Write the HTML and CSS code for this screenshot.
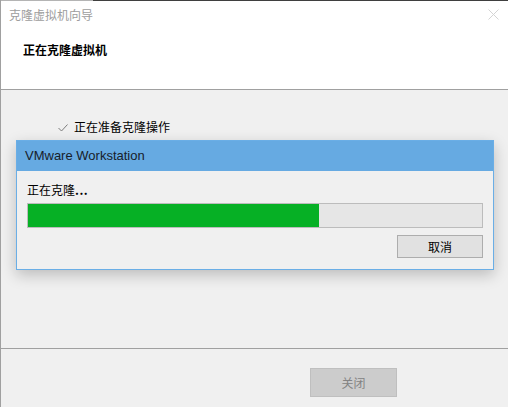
FILE: index.html
```html
<!DOCTYPE html>
<html lang="zh-CN">
<head>
    <meta charset="UTF-8">
    <title>克隆虚拟机向导</title>
    <link rel="stylesheet" href="styles.css">
</head>
<body>
    <div class="window">
        <div class="top-edge"></div>
        <header class="wizard-header">
            <div class="title-bar">
                <span class="title-text">克隆虚拟机向导</span>
                <svg class="close-x" width="11" height="11" viewBox="0 0 11 11">
                    <path d="M0.5 0.5 L10.5 10.5 M10.5 0.5 L0.5 10.5" stroke="#d4d4d4" stroke-width="1" fill="none"/>
                </svg>
            </div>
            <h1 class="step-title">正在克隆虚拟机</h1>
        </header>

        <main class="wizard-body">
            <div class="step-item">
                <svg class="check" width="10" height="8" viewBox="0 0 10 8">
                    <path d="M0.5 4 L3.5 7 L9.5 0.5" stroke="#7c7c7c" stroke-width="1" fill="none"/>
                </svg>
                <span>正在准备克隆操作</span>
            </div>
        </main>

        <footer class="wizard-footer">
            <button class="btn btn-disabled" disabled>关闭</button>
        </footer>

        <!-- progress dialog floats over the wizard -->
        <div class="dialog">
            <div class="dialog-title">VMware Workstation</div>
            <div class="dialog-body">
                <p class="status">正在克隆<span class="dots">...</span></p>
                <div class="progress">
                    <div class="progress-fill" style="width: 64%"></div>
                </div>
                <div class="dialog-actions">
                    <button class="btn btn-cancel">取消</button>
                </div>
            </div>
        </div>
    </div>
</body>
</html>
```

FILE: styles.css
```css
body {
    margin: 0;
    padding: 0;
    font-family: "Noto Sans CJK SC", "Liberation Sans", sans-serif;
    font-size: 12px;
    background-color: #f0f0f0;
}

.window {
    position: relative;
    height: 407px;
    border-left: 1px solid #a0a0a0;
    background-color: #f0f0f0;
    display: flex;
    flex-direction: column;
    box-sizing: border-box;
}

.top-edge {
    height: 1px;
    background: linear-gradient(to right, #b4b4b4 92px, #3f3f3f 92px);
}

.wizard-header {
    background: #ffffff;
    height: 88px;
    border-bottom: 1px solid #a0a0a0;
}

.title-bar {
    height: 28px;
    display: flex;
    align-items: center;
    justify-content: space-between;
    padding: 0 9px 0 8px;
}

.title-text {
    color: #9d9d9d;
    font-size: 12px;
    line-height: 16px;
}

.close-x {
    display: block;
    margin-top: -2px;
}

.step-title {
    margin: 13px 0 0 22px;
    font-size: 12px;
    font-weight: bold;
    line-height: 16px;
    color: #000;
}

.wizard-body {
    flex: 1;
    padding: 28px 0 0 57px;
}

.step-item {
    display: flex;
    align-items: center;
    gap: 6px;
    line-height: 18px;
    color: #000;
}

.check {
    display: block;
    margin-top: 1px;
}

.wizard-footer {
    height: 59px;
    border-top: 1px solid #a0a0a0;
    display: flex;
    justify-content: flex-end;
    align-items: flex-start;
    padding: 19px 111px 0 0;
    box-sizing: border-box;
}

.btn {
    font-family: "Noto Sans CJK SC", "Liberation Sans", sans-serif;
    font-size: 12px;
    padding: 0;
    box-sizing: border-box;
}

.btn-disabled {
    width: 87px;
    height: 29px;
    background: #cccccc;
    border: 1px solid #bfbfbf;
    color: #838383;
}

.dialog {
    position: absolute;
    left: 15px;
    top: 140px;
    width: 478px;
    height: 130px;
    box-sizing: border-box;
    border: 1px solid #6aaee6;
    background: #f0f0f0;
    box-shadow: 0 5px 14px rgba(0, 0, 0, 0.22);
}

.dialog-title {
    height: 30px;
    background: #66aae2;
    color: #17202a;
    font-family: "Liberation Sans", Arial, sans-serif;
    font-size: 13px;
    line-height: 30px;
    padding-left: 8px;
}

.dialog-body {
    padding: 10px 10px 0 10px;
}

.status {
    margin: 0 0 4px 0;
    line-height: 18px;
    color: #000;
}

.dots {
    font-weight: bold;
    letter-spacing: 0.5px;
}

.progress {
    height: 25px;
    box-sizing: border-box;
    border: 1px solid #bcbcbc;
    background: #e6e6e6;
}

.progress-fill {
    height: 100%;
    background: #06b025;
}

.dialog-actions {
    display: flex;
    justify-content: flex-end;
    margin-top: 7px;
}

.btn-cancel {
    width: 86px;
    height: 23px;
    background: #e1e1e1;
    border: 1px solid #adadad;
    color: #000;
}
```
